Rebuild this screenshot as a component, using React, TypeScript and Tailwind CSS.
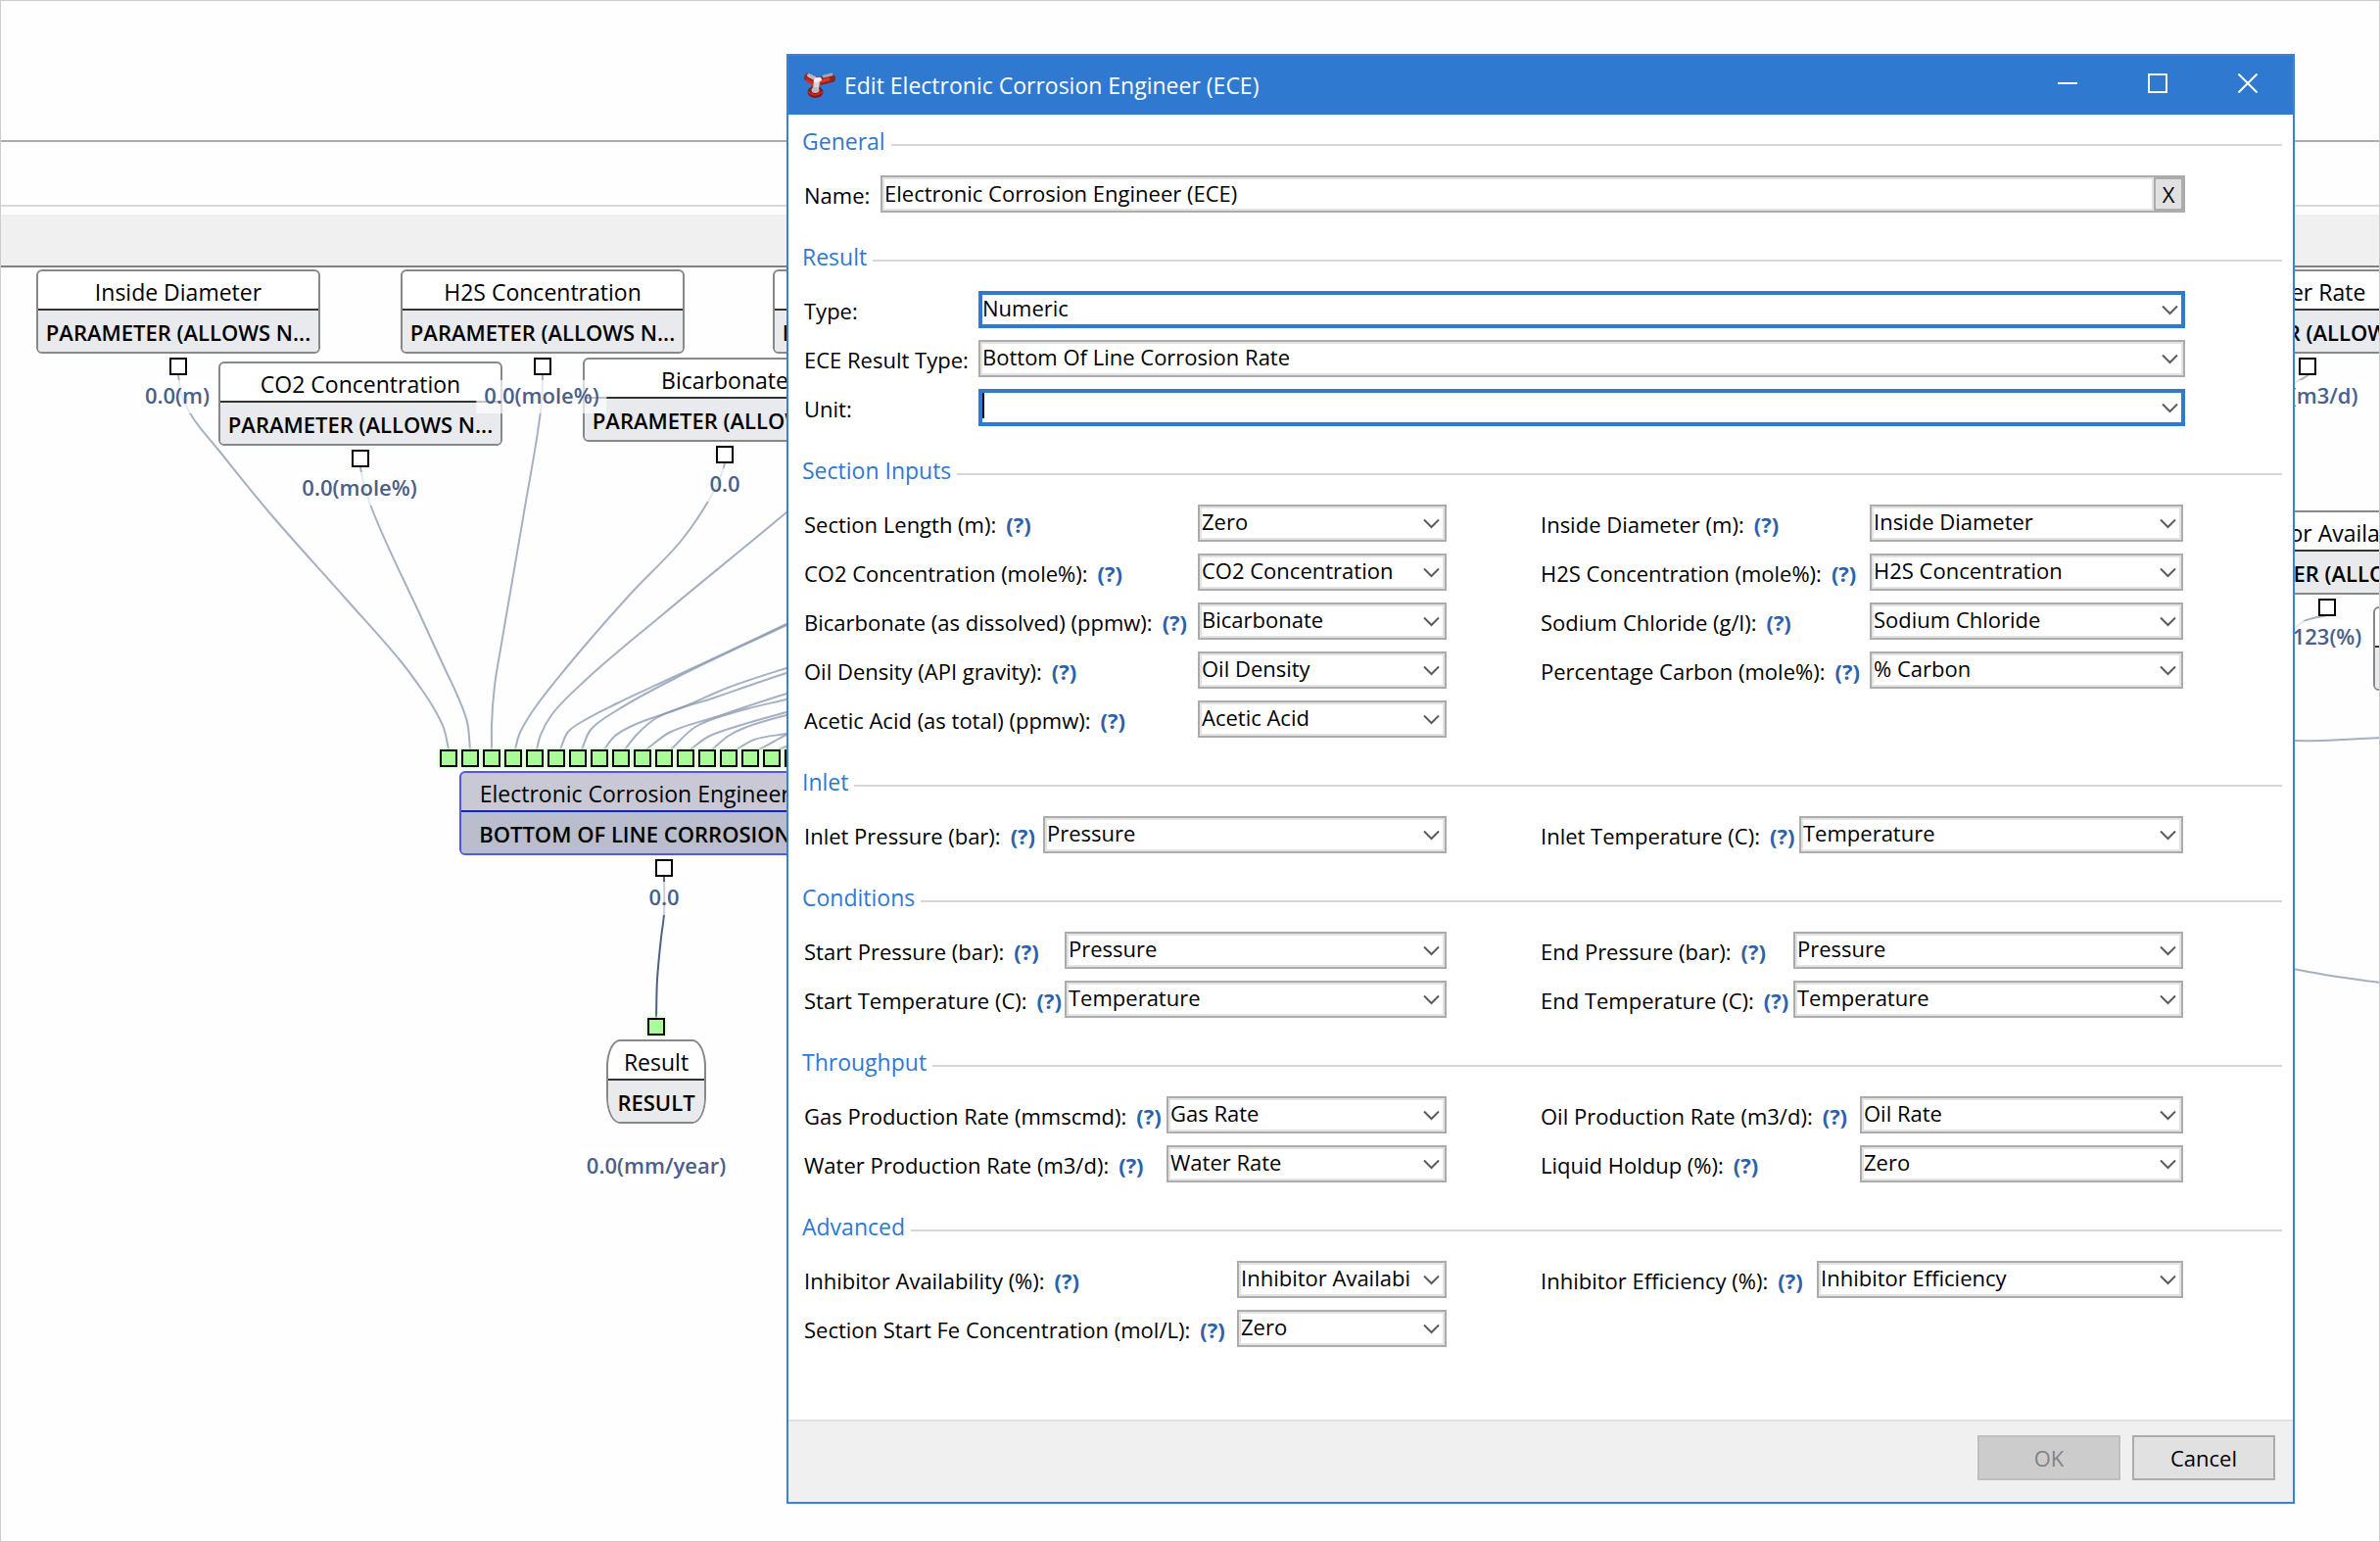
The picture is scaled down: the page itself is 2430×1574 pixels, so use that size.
import React, { useState } from 'react';

interface GraphNode {
  id: string;
  title: string;
  kind: string;
  x: number;
  y: number;
  width: number;
  shape?: 'parameter' | 'engine' | 'result';
}

interface Port {
  x: number;
  y: number;
  filled?: boolean;
}

interface PortValue {
  text: string;
  x: number;
  y: number;
}

interface Field {
  id: string;
  label: string;
  value: string;
}

type Point = [number, number];

const PARAMETER = 'PARAMETER (ALLOWS N...';

const nodes: GraphNode[] = [
  { id: 'insideDiameter', title: 'Inside Diameter', kind: PARAMETER, x: 37, y: 275, width: 290 },
  { id: 'co2', title: 'CO2 Concentration', kind: PARAMETER, x: 223, y: 369, width: 290 },
  { id: 'h2s', title: 'H2S Concentration', kind: PARAMETER, x: 409, y: 275, width: 290 },
  { id: 'bicarbonate', title: 'Bicarbonate', kind: PARAMETER, x: 595, y: 365, width: 290 },
  { id: 'sodium', title: 'Sodium Chloride', kind: PARAMETER, x: 789, y: 275, width: 290 },
  { id: 'waterRate', title: 'Water Rate', kind: PARAMETER, x: 2211, y: 275, width: 290 },
  { id: 'availability', title: 'Inhibitor Availability', kind: PARAMETER, x: 2230, y: 521, width: 290 },
  { id: 'efficiency', title: 'Inhibitor Efficiency', kind: PARAMETER, x: 2423, y: 619, width: 290 },
  {
    id: 'ece',
    title: 'Electronic Corrosion Engineer (ECE)',
    kind: 'BOTTOM OF LINE CORROSION RATE',
    x: 469,
    y: 787,
    width: 418,
    shape: 'engine'
  },
  { id: 'result', title: 'Result', kind: 'RESULT', x: 619, y: 1061, width: 102, shape: 'result' }
];

const ports: Port[] = [
  { x: 173, y: 365 },
  { x: 359, y: 459 },
  { x: 545, y: 365 },
  { x: 731, y: 455 },
  { x: 2347, y: 365 },
  { x: 2367, y: 611 },
  { x: 669, y: 877 },
  { x: 661, y: 1039, filled: true },
  ...Array.from({ length: 17 }, (_, i) => ({ x: 449 + i * 22, y: 765, filled: true }))
];

const portValues: PortValue[] = [
  { text: '0.0(m)', x: 181, y: 388 },
  { text: '0.0(mole%)', x: 367, y: 482 },
  { text: '0.0(mole%)', x: 553, y: 388 },
  { text: '0.0', x: 740, y: 478 },
  { text: '0.0(m3/d)', x: 2357, y: 388 },
  { text: '123(%)', x: 2376, y: 634 },
  { text: '0.0', x: 678, y: 900 },
  { text: '0.0(mm/year)', x: 670, y: 1174 }
];

const wires: Point[][] = [
  [[182, 383], [186, 405], [198, 428], [222, 458], [274, 522], [352, 610], [410, 676], [430, 703], [443, 723], [453, 743], [458, 765]],
  [[368, 477], [371, 492], [380, 520], [430, 630], [453, 680], [467, 710], [477, 737], [480, 765]],
  [[554, 383], [553, 410], [535, 523], [512, 657], [505, 700], [502, 740], [502, 765]],
  [[740, 473], [737, 483], [728, 503], [697, 550], [643, 607], [577, 683], [543, 727], [530, 750], [526, 765]],
  [[830, 500], [803, 523], [677, 627], [597, 695], [563, 730], [552, 750], [548, 765]],
  [[830, 624], [803, 637], [690, 690], [630, 718], [597, 735], [580, 747], [572, 765]],
  [[830, 625], [803, 638], [690, 692], [630, 725], [603, 745], [594, 765]],
  [[830, 674], [803, 682], [743, 702], [697, 722], [643, 742], [627, 752], [617, 765]],
  [[830, 679], [803, 687], [730, 712], [670, 733], [650, 750], [638, 765]],
  [[830, 700], [803, 708], [730, 732], [683, 748], [660, 765]],
  [[830, 708], [803, 714], [750, 727], [710, 742], [685, 765]],
  [[830, 720], [803, 727], [757, 740], [723, 752], [705, 765]],
  [[830, 724], [803, 730], [760, 743], [744, 751], [727, 765]],
  [[830, 745], [803, 749], [770, 755], [752, 765]],
  [[830, 744], [803, 750], [790, 757], [775, 765]],
  [[830, 756], [803, 762], [795, 765]],
  [[2330, 398], [2343, 391], [2357, 383]],
  [[2330, 650], [2343, 641], [2355, 633], [2376, 628]],
  [[2330, 756], [2370, 756], [2430, 753]],
  [[2330, 987], [2380, 996], [2430, 1003]]
];

const resultWire: Point[] = [[678, 895], [678, 933], [675, 957], [671, 1000], [670, 1039]];

const unit = (a: Point, b: Point): Point => {
  const length = Math.hypot(b[0] - a[0], b[1] - a[1]) || 1;
  return [(b[0] - a[0]) / length, (b[1] - a[1]) / length];
};

// Smooth curve through the points, one cubic segment per pair
const wirePath = (points: Point[]) => {
  const tangents = points.map((p, i) => {
    const before = unit(points[i - 1] || p, p);
    const after = unit(p, points[i + 1] || p);
    return unit([0, 0], [before[0] + after[0], before[1] + after[1]]);
  });
  let d = `M${points[0][0]} ${points[0][1]}`;
  for (let i = 0; i < points.length - 1; i++) {
    const [x1, y1] = points[i];
    const [x2, y2] = points[i + 1];
    const reach = Math.hypot(x2 - x1, y2 - y1) / 3;
    d += ` C${x1 + tangents[i][0] * reach} ${y1 + tangents[i][1] * reach}`;
    d += ` ${x2 - tangents[i + 1][0] * reach} ${y2 - tangents[i + 1][1] * reach} ${x2} ${y2}`;
  }
  return d;
};

const nodeFrame = {
  parameter: 'rounded-md border-[#888888] bg-white',
  engine: 'rounded-md border-[#5257e0] bg-[#c9c9d5]',
  result: 'rounded-[14px/28px] border-[#888888] bg-white'
};

const nodeFooter = {
  parameter: 'border-[#333333] bg-[#e8eaee]',
  engine: 'border-[#0f1fe6] bg-[#b9bdcd]',
  result: 'border-[#333333] bg-[#e8eaee]'
};

const NodeBox: React.FC<{ node: GraphNode }> = ({ node }) => {
  const shape = node.shape || 'parameter';
  return (
    <div
      className={`absolute flex h-[86px] flex-col overflow-hidden border-2 text-center whitespace-nowrap text-black ${nodeFrame[shape]}`}
      style={{ left: node.x, top: node.y, width: node.width }}
    >
      <div className="h-[38px] text-[23px] leading-[42px]">{node.title}</div>
      <div className={`flex-1 border-t-2 leading-[44px] font-semibold ${nodeFooter[shape]}`}>
        {node.kind}
      </div>
    </div>
  );
};

const Canvas = () => (
  <div className="absolute inset-0 overflow-hidden text-[22px]">
    {nodes.map((node) => (
      <NodeBox key={node.id} node={node} />
    ))}
    <svg className="absolute inset-0 h-full w-full" fill="none" strokeWidth="2" aria-hidden="true">
      {wires.map((points, i) => (
        <path key={i} d={wirePath(points)} stroke="#8797ae" strokeOpacity="0.75" />
      ))}
      <path d={wirePath(resultWire)} stroke="#4d6385" />
    </svg>
    {portValues.map((value) => (
      <div
        key={`${value.x}-${value.y}`}
        className="absolute h-[34px] -translate-x-1/2 bg-white/70 px-2 leading-[30px] font-semibold whitespace-nowrap text-[#4a6088]"
        style={{ left: value.x, top: value.y }}
      >
        {value.text}
      </div>
    ))}
    {ports.map((port) => (
      <div
        key={`${port.x}-${port.y}`}
        className={`absolute size-[18px] border-2 border-black ${
          port.filled ? 'bg-[#a9fc98] shadow-[0_0_3px_1px_#c9ffbf]' : 'bg-white'
        }`}
        style={{ left: port.x, top: port.y }}
      />
    ))}
  </div>
);

const AppIcon = () => (
  <svg className="h-[26px] w-[33px]" viewBox="0 0 33 26" fill="none" strokeLinecap="round" aria-hidden="true">
    <path d="M4 5 L11 8" stroke="#a32222" strokeWidth="8" />
    <path d="M16 9 L28 6" stroke="#8d2222" strokeWidth="8" />
    <path d="M13 9 L11 18" stroke="#a83a38" strokeWidth="9" />
    <ellipse cx="11.500" cy="20" rx="8" ry="6" fill="#8a1616" />
    <path d="M3 8 L10 12" stroke="#d42a22" strokeWidth="3" />
    <path d="M17 9 L25 7" stroke="#e8352a" strokeWidth="3" />
    <path d="M5 3 L11 6" stroke="#b9b9c0" strokeWidth="4" />
    <path d="M20 4 L28 2" stroke="#a9a4aa" strokeWidth="3" />
    <path d="M13 8 L12 17" stroke="#d3d6da" strokeWidth="6" />
    <path d="M12 8 L16 7" stroke="#f3f3f3" strokeWidth="4" />
    <path d="M5 20 Q11 26 18 20" stroke="#c9241d" strokeWidth="2" />
    <ellipse cx="11.500" cy="18" rx="4" ry="3" fill="#b9bcc2" />
  </svg>
);

const Chevron = () => (
  <svg
    className="pointer-events-none absolute top-[14px] right-[7px] h-[11px] w-[17px]"
    viewBox="0 0 17 11"
    fill="none"
    stroke="#5c5c5c"
    strokeWidth="2"
    aria-hidden="true"
  >
    <path d="M1 1.500 L8.500 9 L16 1.500" />
  </svg>
);

interface DropDownProps {
  id: string;
  value: string;
  active?: boolean;
  editing?: boolean;
}

const DropDown: React.FC<DropDownProps> = ({ id, value, active, editing }) => {
  const [selected, setSelected] = useState(value);

  return (
    <div className="relative min-w-0">
      <select
        id={id}
        value={selected}
        onChange={(e) => setSelected(e.target.value)}
        className={`block h-[38px] w-full appearance-none rounded-none border-2 bg-white pr-9 pb-1 pl-[2px] leading-[30px] outline-none ${
          active
            ? 'border-[#2f79d1] shadow-[inset_0_0_0_2px_#2f79d1]'
            : 'border-[#acacac] shadow-[inset_0_0_0_2px_#e3e3e3]'
        }`}
      >
        <option value={value}>{value}</option>
      </select>
      {editing && <span className="absolute top-1 left-1 h-[26px] w-[2px] bg-black" />}
      <Chevron />
    </div>
  );
};

const Section: React.FC<{ title: string; children: React.ReactNode }> = ({ title, children }) => (
  <section>
    <h2 className="mb-5 flex h-8 items-start gap-[6px] pr-[11px] pl-[14px] text-[23px] text-[#2f79d1]">
      <span className="leading-[34px]">{title}</span>
      <span className="mt-5 h-[2px] flex-1 bg-[#d7d7d7]" />
    </h2>
    {children}
  </section>
);

const FieldColumn: React.FC<{ fields: Field[]; columns: string }> = ({ fields, columns }) => (
  <div className={`grid content-start gap-y-3 ${columns}`}>
    {fields.map((field) => (
      <React.Fragment key={field.id}>
        <div className="flex items-center gap-[10px] pt-[2px] whitespace-nowrap">
          <label htmlFor={field.id}>{field.label}</label>
          <button type="button" aria-label={`Help for ${field.label}`} className="font-bold text-[#2b62ab]">
            (?)
          </button>
        </div>
        <DropDown id={field.id} value={field.value} />
      </React.Fragment>
    ))}
  </div>
);

interface InputGroup {
  title: string;
  left: Field[];
  leftColumns: string;
  right: Field[];
  rightColumns: string;
}

const inputGroups: InputGroup[] = [
  {
    title: 'Section Inputs',
    leftColumns: 'grid-cols-[402px_1fr]',
    left: [
      { id: 'sectionLength', label: 'Section Length (m):', value: 'Zero' },
      { id: 'co2Concentration', label: 'CO2 Concentration (mole%):', value: 'CO2 Concentration' },
      { id: 'bicarbonate', label: 'Bicarbonate (as dissolved) (ppmw):', value: 'Bicarbonate' },
      { id: 'oilDensity', label: 'Oil Density (API gravity):', value: 'Oil Density' },
      { id: 'aceticAcid', label: 'Acetic Acid (as total) (ppmw):', value: 'Acetic Acid' }
    ],
    rightColumns: 'grid-cols-[336px_1fr]',
    right: [
      { id: 'insideDiameter', label: 'Inside Diameter (m):', value: 'Inside Diameter' },
      { id: 'h2sConcentration', label: 'H2S Concentration (mole%):', value: 'H2S Concentration' },
      { id: 'sodiumChloride', label: 'Sodium Chloride (g/l):', value: 'Sodium Chloride' },
      { id: 'percentageCarbon', label: 'Percentage Carbon (mole%):', value: '% Carbon' }
    ]
  },
  {
    title: 'Inlet',
    leftColumns: 'grid-cols-[244px_1fr]',
    left: [{ id: 'inletPressure', label: 'Inlet Pressure (bar):', value: 'Pressure' }],
    rightColumns: 'grid-cols-[264px_1fr]',
    right: [{ id: 'inletTemperature', label: 'Inlet Temperature (C):', value: 'Temperature' }]
  },
  {
    title: 'Conditions',
    leftColumns: 'grid-cols-[266px_1fr]',
    left: [
      { id: 'startPressure', label: 'Start Pressure (bar):', value: 'Pressure' },
      { id: 'startTemperature', label: 'Start Temperature (C):', value: 'Temperature' }
    ],
    rightColumns: 'grid-cols-[258px_1fr]',
    right: [
      { id: 'endPressure', label: 'End Pressure (bar):', value: 'Pressure' },
      { id: 'endTemperature', label: 'End Temperature (C):', value: 'Temperature' }
    ]
  },
  {
    title: 'Throughput',
    leftColumns: 'grid-cols-[370px_1fr]',
    left: [
      { id: 'gasRate', label: 'Gas Production Rate (mmscmd):', value: 'Gas Rate' },
      { id: 'waterRate', label: 'Water Production Rate (m3/d):', value: 'Water Rate' }
    ],
    rightColumns: 'grid-cols-[326px_1fr]',
    right: [
      { id: 'oilRate', label: 'Oil Production Rate (m3/d):', value: 'Oil Rate' },
      { id: 'liquidHoldup', label: 'Liquid Holdup (%):', value: 'Zero' }
    ]
  },
  {
    title: 'Advanced',
    leftColumns: 'grid-cols-[442px_1fr]',
    left: [
      { id: 'inhibitorAvailability', label: 'Inhibitor Availability (%):', value: 'Inhibitor Availability' },
      { id: 'feConcentration', label: 'Section Start Fe Concentration (mol/L):', value: 'Zero' }
    ],
    rightColumns: 'grid-cols-[282px_1fr]',
    right: [{ id: 'inhibitorEfficiency', label: 'Inhibitor Efficiency (%):', value: 'Inhibitor Efficiency' }]
  }
];

const EditDialog = () => {
  const [name, setName] = useState('Electronic Corrosion Engineer (ECE)');

  return (
    <div
      role="dialog"
      aria-labelledby="dialogTitle"
      className="absolute top-[55px] right-[87px] left-[803px] border-2 border-[#3a82d6] bg-white text-[22px] leading-8 text-black"
    >
      {/* Title bar */}
      <div className="flex h-[60px] items-start bg-[#2f79d1] text-white">
        <div className="flex h-full flex-1 items-center gap-2 pl-4">
          <AppIcon />
          <h1 id="dialogTitle" className="text-[23px]">Edit Electronic Corrosion Engineer (ECE)</h1>
        </div>
        <button type="button" aria-label="Minimize" className="flex h-14 w-[92px] items-center justify-center">
          <span className="h-[2px] w-5 bg-white" />
        </button>
        <button type="button" aria-label="Maximize" className="flex h-14 w-[92px] items-center justify-center">
          <span className="size-5 border-2 border-white" />
        </button>
        <button type="button" aria-label="Close" className="flex h-14 w-[92px] items-center justify-center">
          <svg className="size-5" viewBox="0 0 20 20" stroke="white" strokeWidth="2" aria-hidden="true">
            <path d="M0.500 0.500 L19.500 19.500 M19.500 0.500 L0.500 19.500" />
          </svg>
        </button>
      </div>

      <form className="flex flex-col gap-7 pt-[10px] pb-[74px]" onSubmit={(e) => e.preventDefault()}>
        <Section title="General">
          <div className="grid grid-cols-[78px_1fr] items-center pr-[110px] pl-4">
            <label htmlFor="name" className="pt-[2px]">Name:</label>
            <div className="flex h-[38px] border-2 border-[#acacac]">
              <input
                id="name"
                type="text"
                value={name}
                onChange={(e) => setName(e.target.value)}
                className="min-w-0 flex-1 px-[2px] pb-[2px] shadow-[inset_0_0_0_2px_#e3e3e3] outline-none"
              />
              <button
                type="button"
                aria-label="Clear name"
                onClick={() => setName('')}
                className="flex w-[30px] items-center justify-center border-2 border-[#acacac] bg-[#e1e1e1]"
              >
                X
              </button>
            </div>
          </div>
        </Section>

        <Section title="Result">
          <div className="grid grid-cols-[178px_1fr] items-center gap-y-3 pr-[110px] pl-4">
            <label htmlFor="type" className="pt-[2px]">Type:</label>
            <DropDown id="type" value="Numeric" active />
            <label htmlFor="resultType" className="pt-[2px]">ECE Result Type:</label>
            <DropDown id="resultType" value="Bottom Of Line Corrosion Rate" />
            <label htmlFor="unit" className="pt-[2px]">Unit:</label>
            <DropDown id="unit" value="" active editing />
          </div>
        </Section>

        {inputGroups.map((group) => (
          <Section key={group.title} title={group.title}>
            <div className="grid grid-cols-2 gap-x-24 pr-28 pl-4">
              <FieldColumn fields={group.left} columns={group.leftColumns} />
              <FieldColumn fields={group.right} columns={group.rightColumns} />
            </div>
          </Section>
        ))}
      </form>

      {/* Footer */}
      <div className="flex justify-end gap-3 border-t-2 border-[#e1e1e1] bg-[#f0f0f0] pt-[14px] pr-[18px] pb-[22px]">
        <button type="button" disabled className="h-[46px] w-[146px] border-2 border-[#bfbfbf] bg-[#cccccc] text-[#838383]">
          OK
        </button>
        <button type="button" className="h-[46px] w-[146px] border-2 border-[#acacac] bg-[#e1e1e1]">
          Cancel
        </button>
      </div>
    </div>
  );
};

const App = () => (
  <div className="relative min-h-screen overflow-hidden bg-[#fefefe] font-['Open_Sans','Noto_Sans',sans-serif]">
    {/* Ribbon and toolbar strips */}
    <div className="h-[145px] border-b-2 border-[#acacac]" />
    <div className="h-[66px] border-b-2 border-[#d9d9d9]" />
    <div className="mt-2 h-[54px] border-b-2 border-[#808080] bg-[#f0f0f0]" />

    <Canvas />
    <EditDialog />
    <div className="pointer-events-none absolute inset-0 border border-[#cccccc]" />
  </div>
);

export default App;
